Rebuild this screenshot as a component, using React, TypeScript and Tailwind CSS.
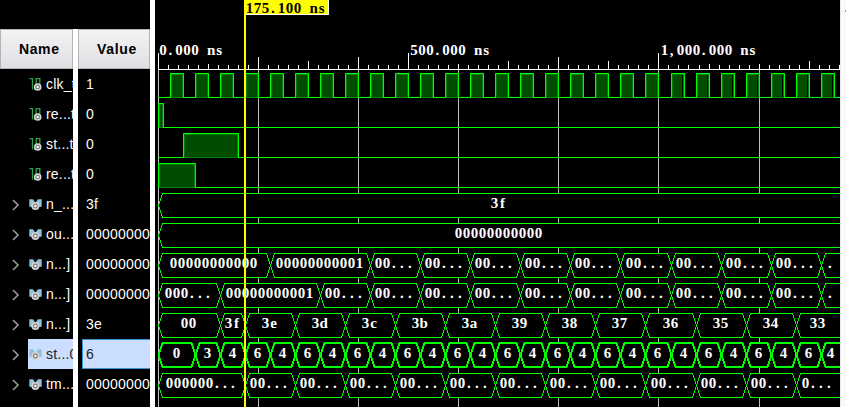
import React from "react";

type Bus = { y: number; edges: number[]; labels: string[]; thick?: boolean };

const END = 840;
const GREEN = "#00ff00";

// Screen x for a nominal pixel offset; the time scale gains one pixel past 1,000 ns.
const shift = (x: number) => (x > 660 ? x + 1 : x);
const range = (from: number, to: number, step: number) => {
  const out: number[] = [];
  for (let x = from; x <= to; x += step) out.push(shift(x));
  return out;
};

const fifty = range(245, 795, 50);
const states = range(245, 820, 25);
const counters = range(370, 820, 50);

const buses: Bus[] = [
  { y: 193, edges: [158], labels: ["3f"] },
  { y: 223, edges: [158], labels: ["00000000000"] },
  {
    y: 253,
    edges: [158, 270, ...counters],
    labels: ["00000000000", "00000000001", ...counters.map((_, i) => (i === counters.length - 1 ? "." : "00..."))],
  },
  {
    y: 283,
    edges: [158, 220, 320, ...counters],
    labels: ["000...", "00000000001", "00...", ...counters.map((_, i) => (i === counters.length - 1 ? "." : "00..."))],
  },
  {
    y: 313,
    edges: [158, 220, ...fifty],
    labels: ["00", "3f", "3e", "3d", "3c", "3b", "3a", "39", "38", "37", "36", "35", "34", "33"],
  },
  {
    y: 343,
    thick: true,
    edges: [158, 195, 220, ...states],
    labels: ["0", "3", "4", ...states.map((_, i) => (i % 2 ? "4" : "6"))],
  },
  {
    y: 373,
    edges: [158, ...fifty],
    labels: ["000000...", ...fifty.map((_, i) => (i === fifty.length - 1 ? "0..." : "00..."))],
  },
];

// Fixed-pitch text: every character sits in an 8px cell.
function Mono({ x, y, text, fill = "#fff" }: { x: number; y: number; text: string; fill?: string }) {
  const xs = text.split("").map((c, i) => x + i * 8 + (c === "." || c === "," ? 2.8 : 3.6));
  return (
    <text x={xs.join(" ")} y={y} fill={fill} textAnchor="middle" className="font-['Liberation_Serif',serif] text-[15px] font-bold whitespace-pre">
      {text}
    </text>
  );
}

function Pulse({ x, w, y, seam }: { x: number; w: number; y: number; seam?: boolean }) {
  return (
    <g>
      <rect x={x} y={y} width={w + 1} height={25} fill="#008000" />
      <rect x={x + 2} y={y + 2} width={w - 3} height={22} fill="#004d00" />
      {seam && <rect x={x + w - 2} y={y + 2} width={1} height={22} fill="#000" />}
      <path d={`M${x + 0.5} ${y + 25}V${y + 0.5}H${x + w + 0.5}V${y + 25}`} fill="none" stroke={GREEN} />
    </g>
  );
}

function BusRow({ bus }: { bus: Bus }) {
  const { y, edges, labels, thick } = bus;
  const t = thick ? y : y + 0.5;
  const m = thick ? y + 12 : y + 12.5;
  const b = thick ? y + 24 : y + 24.5;
  return (
    <g>
      {edges.map((e, i) => {
        const last = i === edges.length - 1;
        const n = last ? END : edges[i + 1];
        const l = e + 0.5;
        const r = n + 0.5;
        const d = last
          ? `M${END} ${t}H${l + 4}L${l} ${m}L${l + 4} ${b}H${END}`
          : `M${l} ${m}L${l + 4} ${t}H${r - 4}L${r} ${m}L${r - 4} ${b}H${l + 4}Z`;
        return <path key={e} d={d} fill="#000" stroke={GREEN} strokeWidth={thick ? 2 : 1} shapeRendering="crispEdges" />;
      })}
      {edges.map((e, i) => {
        const n = i === edges.length - 1 ? END : edges[i + 1];
        return <Mono key={e} x={Math.round((e + n) / 2 - labels[i].length * 4)} y={y + 15} text={labels[i]} />;
      })}
    </g>
  );
}

const tall: Record<number, number> = {
  158: 53, 208: 64, 258: 57, 308: 61, 358: 57, 408: 53, 458: 64, 508: 61, 558: 57, 608: 61, 658: 53, 709: 64, 759: 64, 809: 61,
};

function tickX(i: number) {
  const x = 158 + i * 10;
  return x > 690 ? x + 1 : x;
}

function Waves() {
  return (
    <svg width="685" height="407" viewBox="155 0 685 407" className="block shrink-0 bg-black">
      {[158, 258, 358, 458, 558, 658, 759].map((x) => (
        <rect key={x} x={x} y={70} width={1} height={337} fill="#c0c0c0" />
      ))}
      <rect x={158} y={69} width={682} height={1} fill="#fff" />
      {Array.from({ length: 69 }, (_, i) => {
        const x = tickX(i);
        const top = tall[x] ?? 65;
        return <rect key={x} x={x} y={top} width={1} height={69 - top} fill="#fff" />;
      })}
      <Mono x={159.5} y={55} text="0.000 ns" />
      <Mono x={410.5} y={55} text="500.000 ns" />
      <Mono x={660.8} y={55} text="1,000.000 ns" />

      {[97, 127, 157, 187].map((y) => (
        <rect key={y} x={158} y={y} width={682} height={1} fill={GREEN} />
      ))}
      {range(170, 820, 25).map((x) => (
        <Pulse key={x} x={x} w={13} y={73} seam={x > 660} />
      ))}
      <Pulse x={158} w={5} y={103} />
      <Pulse x={183} w={55} y={133} />
      <Pulse x={158} w={37} y={163} />

      {buses.map((b) => (
        <BusRow key={b.y} bus={b} />
      ))}

      <rect x={244} y={0} width={2} height={407} fill="#ffff00" />
      <rect x={245} y={0} width={84} height={15} fill="#fff" />
      <rect x={244} y={0} width={84} height={14} fill="#ffff00" />
      <Mono x={246} y={13} text="175.100 ns" fill="#000" />
    </svg>
  );
}

function BitIcon() {
  return (
    <svg width="13" height="14" viewBox="0 0 13 14" className="block shrink-0">
      <path d="M0.5 1.6H3.5V12.4M5 12.4H7.2V1.6H10.8V7" fill="none" stroke="#2f9e4b" strokeWidth="1.3" />
      <circle cx="8.7" cy="10" r="3.8" fill="#d4d4d4" />
      <circle cx="8.7" cy="10" r="2.3" fill="#777" />
      <circle cx="8.7" cy="10" r="1.2" fill="#fff" />
    </svg>
  );
}

function BusIcon() {
  return (
    <svg width="13" height="14" viewBox="0 0 13 14" className="block shrink-0">
      <path d="M0.3 2.3H4L5.6 4.5V9.7H0.3ZM12.7 2.3H9L7.2 4.5V9.7H12.7Z" fill="#8fc1d9" />
      <circle cx="6.4" cy="9" r="4" fill="#d4d4d4" />
      <circle cx="6.4" cy="9" r="2.4" fill="#777" />
      <circle cx="6.4" cy="9" r="1.2" fill="#fff" />
    </svg>
  );
}

const rows = [
  { name: "clk_t", value: "1" },
  { name: "re...t", value: "0" },
  { name: "st...t", value: "0" },
  { name: "re...t", value: "0" },
  { name: "n_...", value: "3f", bus: true },
  { name: "ou...", value: "00000000", bus: true },
  { name: "n...]", value: "00000000", bus: true },
  { name: "n...]", value: "00000000", bus: true },
  { name: "n...]", value: "3e", bus: true },
  { name: "st...0", value: "6", bus: true, selected: true },
  { name: "tm...", value: "00000000", bus: true },
];

function Header({ title, className }: { title: string; className: string }) {
  return (
    <div className={`h-10 shrink-0 border border-[#b4b4b8] bg-linear-to-b from-[#f3f3f3] to-[#e0e0e4] pt-[9px] text-[14px] leading-5 font-bold text-black ${className}`}>
      {title}
    </div>
  );
}

export default function App() {
  return (
    <div className="flex h-[407px] w-[846px] overflow-hidden bg-white font-['Liberation_Sans',Arial,sans-serif]">
      <div className="flex w-[150px] shrink-0 flex-col bg-black">
        <div className="h-[29px] shrink-0" />
        <div className="flex h-[378px]">
          <div className="w-[73px] shrink-0 overflow-hidden">
            <Header title="Name" className="pl-[18px] tracking-[0.6px]" />
            {rows.map((r, i) => (
              <div key={i} className="flex h-[30px]">
                <div className="flex w-7 shrink-0 items-center pl-3">
                  {r.bus && (
                    <svg width="8" height="12" viewBox="0 0 8 12" className="mt-0.5 block">
                      <path d="M1 1L6 6L1 11" fill="none" stroke="#999" strokeWidth="1.6" />
                    </svg>
                  )}
                </div>
                <div className={`flex flex-1 items-center gap-1 overflow-hidden pl-[1px] ${r.selected ? "bg-[#ccdeff] text-[#222]" : "text-white"}`}>
                  {r.bus ? <BusIcon /> : <BitIcon />}
                  <span className="text-[14px] leading-[30px] tracking-[0.2px] whitespace-nowrap">{r.name}</span>
                </div>
              </div>
            ))}
          </div>
          <div className="w-[5px] shrink-0 bg-white" />
          <div className="w-[72px] shrink-0 overflow-hidden">
            <Header title="Value" className="pl-[18px] tracking-[0.7px]" />
            {rows.map((r, i) => (
              <div
                key={i}
                className={`ml-1 h-[30px] overflow-hidden text-[14px] leading-7 tracking-[0.2px] whitespace-nowrap ${
                  r.selected ? "border border-r-0 border-[#3c96d8] bg-[#ccdeff] pl-[3px] text-[#222]" : "pl-1 pt-px text-white"
                }`}
              >
                {r.value}
              </div>
            ))}
          </div>
        </div>
      </div>
      <div className="w-[5px] shrink-0 bg-white" />
      <Waves />
      <div className="flex w-[6px] shrink-0 justify-end border-l border-[#e8e8e8] bg-[#fafafa] pt-2.5">
        <div className="h-0.5 w-px bg-[#999]" />
      </div>
    </div>
  );
}
